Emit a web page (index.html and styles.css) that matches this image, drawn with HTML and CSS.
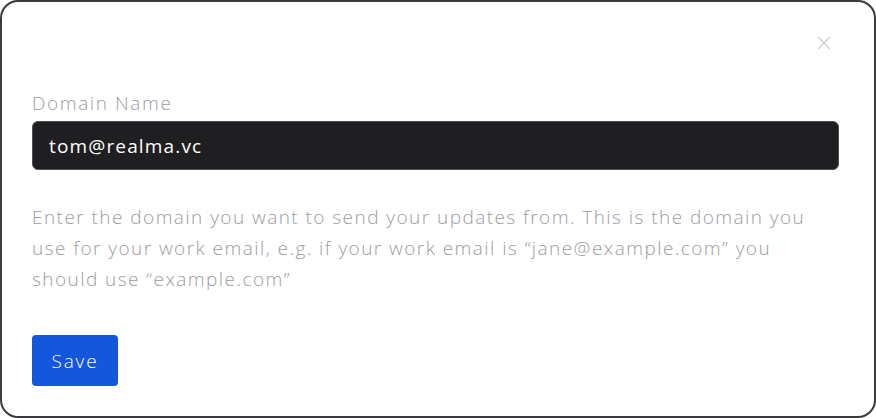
FILE: index.html
```html
<!DOCTYPE html>
<html lang="en">
<head>
<meta charset="utf-8">
<title>Domain Name</title>
<link rel="stylesheet" href="styles.css">
</head>
<body>
<div class="card">
  <div class="card-header">
    <button class="close" aria-label="Close">
      <svg width="14" height="14" viewBox="0 0 14 14"><path d="M1 1L13 13M13 1L1 13" stroke="#cfcfd1" stroke-width="1.4" fill="none"/></svg>
    </button>
  </div>
  <label class="label" for="domain">Domain Name</label>
  <div class="input" id="domain">tom@realma.vc</div>
  <p class="help">Enter the domain you want to send your updates from. This is the domain you use for your work email, e.g. if your work email is “jane@example.com” you should use “example.com”</p>
  <button class="save">Save</button>
</div>
</body>
</html>
```

FILE: styles.css
```css
html, body {
  margin: 0;
  padding: 0;
  background: #ffffff;
}
body {
  font-family: "Open Sans", "Liberation Sans", sans-serif;
}
.card {
  box-sizing: border-box;
  width: 876px;
  height: 418px;
  border: 2px solid #3b3b3d;
  border-radius: 18px;
  padding: 26px 35px 0 30px;
  display: flex;
  flex-direction: column;
  align-items: flex-start;
}
.card-header {
  align-self: stretch;
  display: flex;
  justify-content: flex-end;
  height: 30px;
}
.close {
  width: 30px;
  height: 30px;
  padding: 0;
  border: 0;
  background: transparent;
  display: flex;
  align-items: center;
  justify-content: center;
}
.label {
  margin-top: 34px;
  font-size: 19px;
  font-weight: 300;
  letter-spacing: 1.6px;
  line-height: 22px;
  color: #9c9ca1;
}
.input {
  align-self: stretch;
  box-sizing: border-box;
  margin-top: 7px;
  height: 49px;
  background: #1f1f22;
  border: 1px solid #505054;
  border-radius: 6px;
  padding: 0 16px;
  display: flex;
  align-items: center;
  color: #ffffff;
  font-size: 19px;
  font-weight: 500;
  letter-spacing: 1.15px;
}
.help {
  margin: 32px 0 0;
  font-size: 19px;
  font-weight: 300;
  letter-spacing: 1.45px;
  line-height: 31px;
  color: #9c9ca1;
}
.save {
  margin-top: 40px;
  width: 86px;
  height: 51px;
  border: 0;
  border-radius: 4px;
  background: #1557dc;
  color: #ffffff;
  font-family: "Open Sans", "Liberation Sans", sans-serif;
  font-size: 19px;
  font-weight: 300;
  letter-spacing: 1.8px;
}
```
